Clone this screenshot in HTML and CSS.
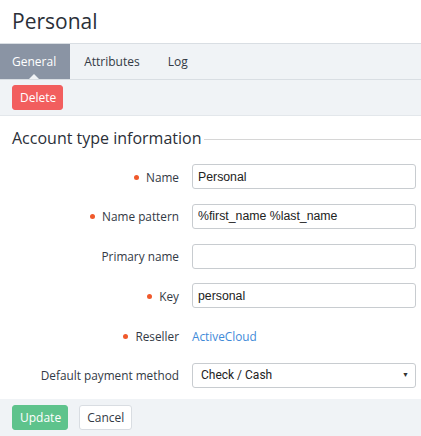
FILE: index.html
```html
<!DOCTYPE html>
<html>
<head>
<meta charset="utf-8">
<link rel="stylesheet" href="styles.css">
</head>
<body>
<h1 class="title">Personal</h1>
<nav class="tabs">
  <a class="tab active">General</a>
  <a class="tab">Attributes</a>
  <a class="tab">Log</a>
</nav>
<div class="toolbar">
  <button class="btn btn-danger">Delete</button>
</div>
<section class="panel">
  <div class="legend"><span>Account type information</span><i class="rule"></i></div>
  <div class="row">
    <label class="lbl req">Name</label>
    <input class="field" value="Personal">
  </div>
  <div class="row">
    <label class="lbl req">Name pattern</label>
    <input class="field" value="%first_name %last_name">
  </div>
  <div class="row">
    <label class="lbl">Primary name</label>
    <input class="field" value="">
  </div>
  <div class="row">
    <label class="lbl req">Key</label>
    <input class="field" value="personal">
  </div>
  <div class="row">
    <label class="lbl req">Reseller</label>
    <a class="link">ActiveCloud</a>
  </div>
  <div class="row">
    <label class="lbl">Default payment method</label>
    <div class="select"><span>Check / Cash</span><span class="caret">▼</span></div>
  </div>
</section>
<footer class="footer">
  <button class="btn btn-success">Update</button>
  <button class="btn btn-default">Cancel</button>
</footer>
</body>
</html>
```
FILE: styles.css
```css
* { box-sizing: border-box; }
html, body { margin: 0; padding: 0; background: #fff; }
body { font-family: "Open Sans", "Noto Sans", sans-serif; color: #333a45; width: 421px; height: 436px; overflow: hidden; }
.title { margin: 0; font-weight: 400; font-size: 21px; line-height: 43px; height: 43px; padding: 0 12px; color: #2b2f38; }
.tabs { display: flex; height: 37px; background: #f0f3f6; border-top: 1px solid #d9dee3; border-bottom: 1px solid #d9dee3; }
.tab { display: block; position: relative; line-height: 35px; font-size: 12px; color: #333a45; padding: 0 14px; }
.tab.active { background: #8a94a4; color: #fff; padding: 0 14px 0 12px; }
.tab.active::after { content: ""; position: absolute; left: 29px; bottom: 0; border: 5px solid transparent; border-bottom-color: #f0f3f6; border-top: 0; }
.toolbar { background: #f0f3f6; padding: 5px 12px 5px; }
.btn { font-family: inherit; font-size: 12px; height: 25px; border-radius: 3px; border: 1px solid transparent; padding: 0 7px; cursor: pointer; }
.btn-danger { background: #f25e5e; color: #fff; border-color: #f25e5e; width: 51px; }
.btn-success { background: #5ec38c; color: #fff; border-color: #5ec38c; width: 56px; }
.btn-default { background: #fff; color: #333a45; border-color: #d9dde2; width: 53px; margin-left: 7px; }
.panel { padding: 10px 0 11px; border-top: 1px solid #e3e7eb; }
.legend { display: flex; align-items: center; padding-left: 12px; font-size: 16px; height: 24px; margin-bottom: 14px; color: #2b2f38; }
.legend .rule { flex: 1; height: 1px; background: #d6d6d6; margin-left: 3px; margin-top: 2px; }
.row { display: flex; align-items: center; height: 25px; margin-bottom: 14.8px; }
.row:last-child { margin-bottom: 0; }
.lbl { width: 179px; text-align: right; font-size: 11.8px; color: #333a45; flex: none; }
.lbl.req::before { content: ""; display: inline-block; width: 5px; height: 5px; border-radius: 50%; background: #f0592b; margin-right: 7px; vertical-align: 2px; }
.field, .select { margin-left: 13px; width: 224px; height: 25px; border: 1px solid #c8ccd0; border-radius: 3px; font-family: "Liberation Sans", Arial, sans-serif; font-size: 12.3px; color: #222; padding: 0 5px; }
.select { display: flex; align-items: center; justify-content: space-between; font-family: Roboto, sans-serif; font-weight: 400; font-size: 12px; padding: 0 6px 0 8px; }
.caret { font-size: 7px; color: #333; }
.link { margin-left: 13px; color: #3f8ad8; font-size: 11.8px; }
.footer { background: #f0f3f6; padding: 6px 12px; height: 38px; }
```
